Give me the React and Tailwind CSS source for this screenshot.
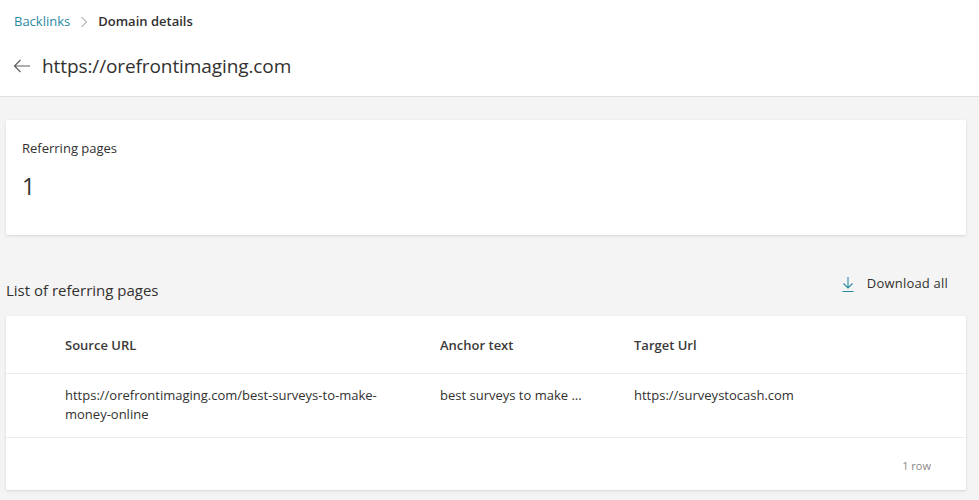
import React from "react";

const font = { fontFamily: '"Open Sans", "Noto Sans", sans-serif' };

const rows = [
  {
    source: "https://orefrontimaging.com/best-surveys-to-make-money-online",
    anchor: "best surveys to make ...",
    target: "https://surveystocash.com",
  },
];

export default function App() {
  return (
    <div className="w-[979px] h-[500px] bg-[#f4f4f4] text-[#323130] overflow-hidden" style={font}>
      {/* Header */}
      <div className="bg-white h-[97px] border-b border-[#e1e1e1] pl-[14px]">
        <div className="flex items-center h-[42px] pt-[1px] text-[13px]">
          <span className="text-[#2a8aa3]">Backlinks</span>
          <svg className="mx-[10px]" width="8" height="12" viewBox="0 0 8 12" fill="none">
            <path d="M1.5 1 L6.5 6 L1.5 11" stroke="#8a8886" strokeWidth="1" />
          </svg>
          <span className="font-semibold text-[#323130]">Domain details</span>
        </div>
        <div className="flex items-center h-[50px] -mt-[1px]">
          <svg width="18" height="14" viewBox="0 0 18 14" fill="none" className="-ml-[1px]">
            <path d="M17 7 H1.5 M7.5 1 L1.5 7 L7.5 13" stroke="#605e5c" strokeWidth="1.2" />
          </svg>
          <span className="ml-[11px] text-[19px] text-[#323130] tracking-[-0.1px]">https://orefrontimaging.com</span>
        </div>
      </div>

      {/* Summary card */}
      <div className="ml-[6px] mt-[23px] w-[960px] h-[115px] bg-white rounded-[2px] shadow-[0_1px_3px_rgba(0,0,0,0.13)] px-[16px] pt-[18px]">
        <div className="text-[13px] leading-[20px]">Referring pages</div>
        <div className="text-[23px] leading-[30px] mt-[13px] text-[#323130]">1</div>
      </div>

      {/* List header */}
      <div className="flex items-center justify-between ml-[6px] w-[960px] mt-[37px] h-[36px]">
        <span className="text-[15px]">List of referring pages</span>
        <div className="flex items-center mr-[18px] -mt-[12px]">
          <svg width="14" height="17" viewBox="0 0 14 17" fill="none">
            <path d="M7 1 V12 M2.5 7.5 L7 12 L11.5 7.5 M1.5 15.5 H12.5" stroke="#2a8aa3" strokeWidth="1.1" />
          </svg>
          <span className="ml-[12px] text-[13px] tracking-[0.2px] text-[#323130]">Download all</span>
        </div>
      </div>

      {/* Table card */}
      <div className="ml-[6px] mt-[8px] w-[960px] h-[174px] bg-white rounded-[2px] shadow-[0_1px_3px_rgba(0,0,0,0.13)] text-[13px]">
        <div className="grid grid-cols-[434px_194px_1fr] h-[58px] items-center border-b border-[#ececec] font-semibold text-[#3b3a39] pt-[2px]">
          <div className="pl-[59px]">Source URL</div>
          <div>Anchor text</div>
          <div>Target Url</div>
        </div>
        {rows.map((r) => (
          <div key={r.source} className="grid grid-cols-[434px_194px_1fr] h-[64px] border-b border-[#ececec] pt-[12px] leading-[19px]">
            <div className="pl-[59px] pr-[40px] break-words">
              https://orefrontimaging.com/best-surveys-to-make-
              <br />
              money-online
            </div>
            <div>{r.anchor}</div>
            <div>{r.target}</div>
          </div>
        ))}
        <div className="flex justify-end items-center h-[51px] pt-[5px] pr-[35px] text-[11px] text-[#8a8886]">
          1 row
        </div>
      </div>
    </div>
  );
}
